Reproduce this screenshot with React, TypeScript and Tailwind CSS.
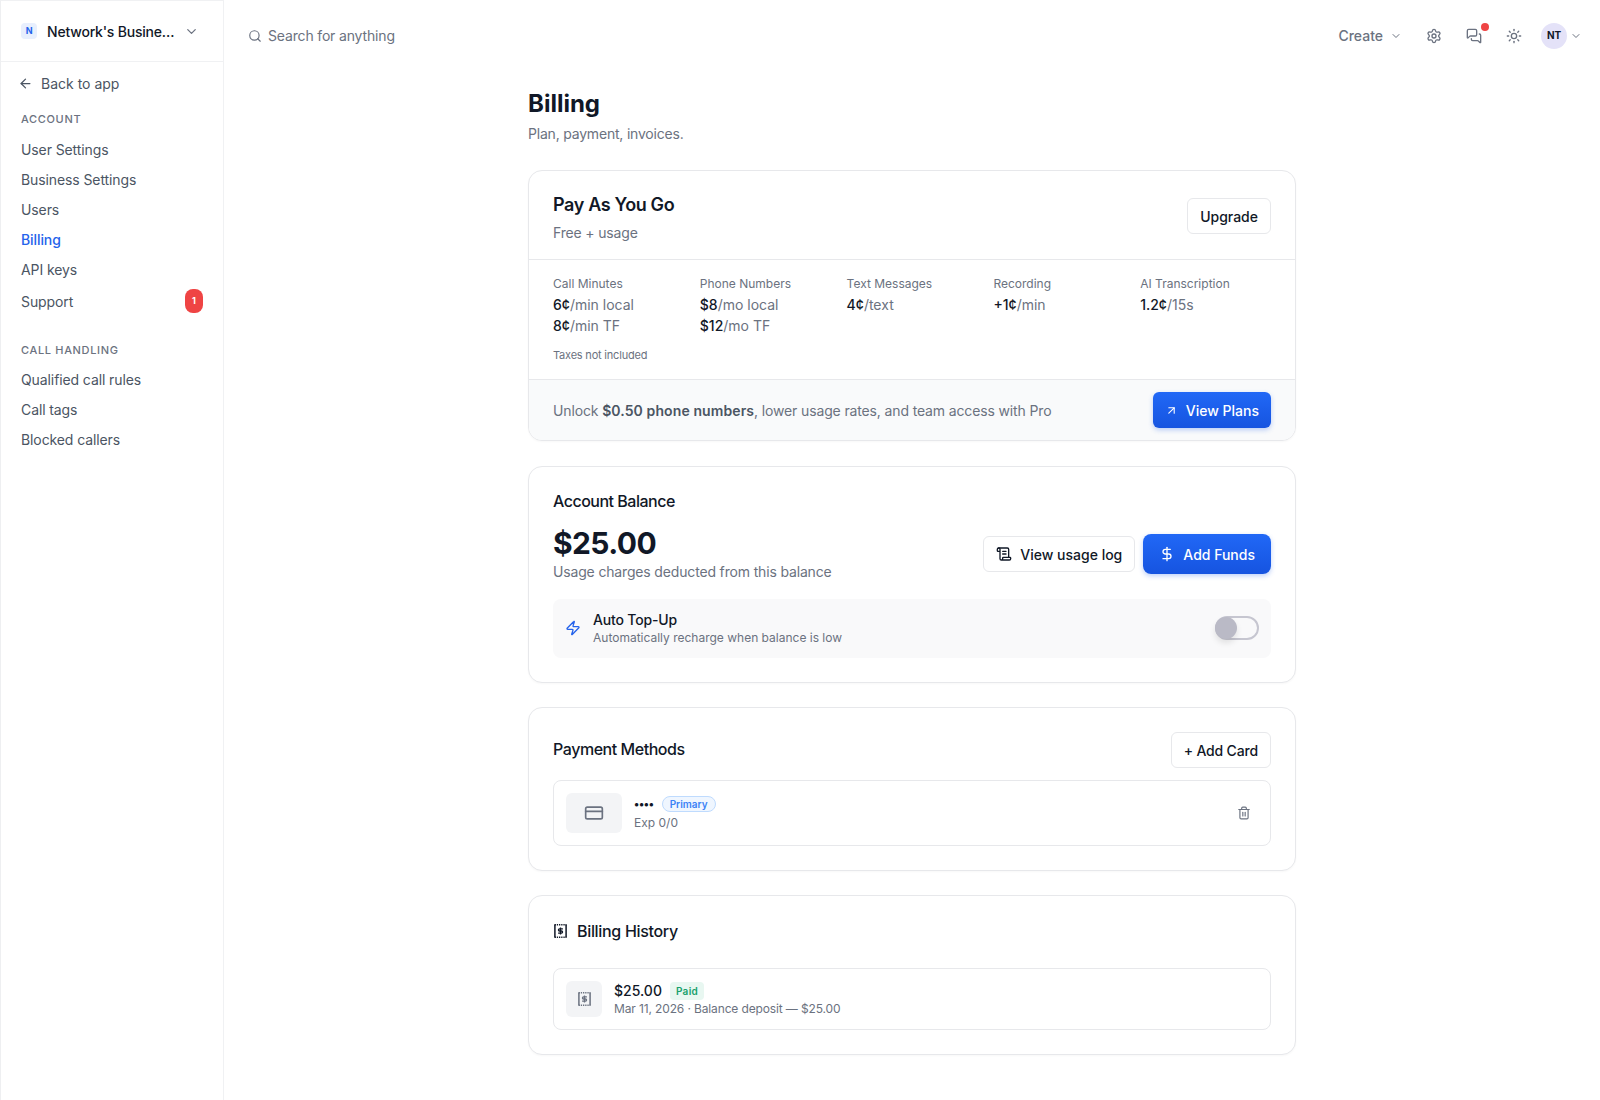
import { ArrowLeft, ArrowUpRight, ChevronDown, CreditCard, DollarSign, MessagesSquare, ScrollText, Search, Settings, Sun, Trash2, Zap } from "lucide-react"

const accountLinks = ["User Settings", "Business Settings", "Users", "Billing", "API keys"]
const callLinks = ["Qualified call rules", "Call tags", "Blocked callers"]

const rates = [
    { label: "Call Minutes", lines: [["6¢", "/min local"], ["8¢", "/min TF"]] },
    { label: "Phone Numbers", lines: [["$8", "/mo local"], ["$12", "/mo TF"]] },
    { label: "Text Messages", lines: [["4¢", "/text"]] },
    { label: "Recording", lines: [["+1¢", "/min"]] },
    { label: "AI Transcription", lines: [["1.2¢", "/15s"]] },
]

function BillIcon({ className }: { className?: string }) {
    return (
        <svg viewBox="0 0 13 14" fill="none" stroke="currentColor" className={className}>
            <path d="M0.9 0.6V13.4M12.1 0.6V13.4" strokeWidth="1.5" />
            <path d="M0.6 0.8H12.4M0.6 13.2H12.4" strokeWidth="1.5" strokeDasharray="1.3 0.9" />
            <path d="M8.9 4.9H5.5a1 1 0 0 0 0 2.1h2a1 1 0 0 1 0 2.1H4.1M6.5 3.4v7.2" strokeWidth="1.3" />
        </svg>
    )
}

function Sidebar() {
    return (
        <aside className="flex h-[1100px] w-[224px] shrink-0 flex-col border-x border-t border-[#f0f1f3] border-l-[#eeeff1]">
            <div className="flex h-[61px] items-center justify-between border-b border-[#f0f1f3] pl-[20px] pr-[24px]">
                <div className="flex items-center gap-[10px]">
                    <div className="flex h-[16px] w-[16px] items-center justify-center rounded-[4px] bg-[#e8effd] text-[9px] font-bold text-[#2563eb]">N</div>
                    <span className="text-[14px] font-medium tracking-[-0.2px] text-[#111827]">Network's Busine…</span>
                </div>
                <ChevronDown className="h-[15px] w-[15px] text-[#6b7280]" />
            </div>
            <div className="flex h-[42px] items-center gap-[8px] pl-[17px] text-[14px] tracking-normal text-[#4b5563]">
                <ArrowLeft className="h-[15px] w-[15px]" />
                <span>Back to app</span>
            </div>
            <nav className="flex flex-col px-[20px] pt-[6px] text-[14px] tracking-[-0.1px] text-[#4b5563]">
                <div className="mb-[6px] flex h-[18px] items-center text-[11px] font-medium tracking-[0.06em] text-[#6b7280]">ACCOUNT</div>
                {accountLinks.map((item) => (
                    <div key={item} className={`flex h-[30px] items-center ${item === "Billing" ? "font-medium text-[#2563eb]" : ""}`}>
                        {item}
                    </div>
                ))}
                <div className="flex h-[34px] items-center justify-between">
                    <span>Support</span>
                    <span className="flex h-[24px] w-[18px] items-center justify-center rounded-[8px] bg-[#ef4444] text-[9px] font-bold text-white">1</span>
                </div>
                <div className="mb-[5px] mt-[23px] flex h-[18px] items-center text-[11px] font-medium tracking-[0.06em] text-[#6b7280]">CALL HANDLING</div>
                {callLinks.map((item) => (
                    <div key={item} className="flex h-[30px] items-center">{item}</div>
                ))}
            </nav>
        </aside>
    )
}

function TopBar() {
    return (
        <header className="flex h-[71px] items-center justify-between pl-[24px] pr-[18px]">
            <div className="flex items-center gap-[6px] text-[14px] text-[#6b7280]">
                <Search className="h-[14px] w-[14px]" />
                <span>Search for anything</span>
            </div>
            <div className="flex items-center text-[#6b7280]">
                <span className="text-[14px] font-medium tracking-normal">Create</span>
                <ChevronDown className="ml-[7px] h-[12px] w-[12px]" />
                <Settings className="ml-[24px] h-[16px] w-[16px]" />
                <div className="relative ml-[24px]">
                    <MessagesSquare className="h-[16px] w-[16px]" />
                    <span className="absolute -right-[7px] -top-[5px] h-[8px] w-[8px] rounded-full bg-[#ef4444]" />
                </div>
                <Sun className="ml-[24px] h-[16px] w-[16px]" />
                <div className="ml-[19px] flex h-[26px] w-[26px] items-center justify-center rounded-full bg-[#e4e2f8] text-[10px] font-bold text-[#111827]">NT</div>
                <ChevronDown className="ml-[3px] h-[12px] w-[12px]" />
            </div>
        </header>
    )
}

function PlanCard() {
    return (
        <section className="overflow-hidden rounded-[14px] border border-[#e7e8eb] bg-white shadow-[0_1px_2px_rgba(0,0,0,0.03)]">
            <div className="flex h-[89px] items-center justify-between border-b border-[#e7e8eb] px-[24px] pt-[2px]">
                <div className="mt-[2px]">
                    <h2 className="text-[18px] font-semibold leading-[28px] tracking-[-0.36px] text-[#111827]">Pay As You Go</h2>
                    <p className="mt-[4px] text-[14px] leading-[20px] text-[#6b7280]">Free + usage</p>
                </div>
                <button className="h-[36px] rounded-[6px] border border-[#e7e8eb] px-[12px] text-[14px] font-medium tracking-normal text-[#111827]">Upgrade</button>
            </div>
            <div className="h-[119px] px-[24px] pt-[16px]">
                <div className="grid grid-cols-5 gap-[16px]">
                    {rates.map((rate) => (
                        <div key={rate.label}>
                            <div className="text-[12px] leading-[16px] tracking-normal text-[#6b7280]">{rate.label}</div>
                            <div className="mt-[4px] flex flex-col gap-[2.5px]">
                                {rate.lines.map(([price, unit]) => (
                                    <div key={unit} className="text-[14px] leading-[18px] tracking-normal text-[#6b7280]">
                                        <span className="font-medium text-[#111827]">{price}</span>
                                        {unit}
                                    </div>
                                ))}
                            </div>
                        </div>
                    ))}
                </div>
                <p className="mt-[12px] text-[11px] leading-[16px] tracking-[-0.2px] text-[#6b7280]">Taxes not included</p>
            </div>
            <div className="flex h-[61px] items-center justify-between border-t border-[#e7e8eb] bg-[#f9fafb] px-[24px]">
                <p className="text-[14px] tracking-[-0.14px] text-[#6b7280]">
                    Unlock <span className="font-semibold tracking-[0.1px] text-[#4b5563]">$0.50 phone numbers</span>, lower usage rates, and team access with Pro
                </p>
                <button className="flex h-[36px] items-center gap-[8px] rounded-[6px] bg-gradient-to-b from-[#2168f6] to-[#1654e0] px-[12px] text-[14px] font-medium tracking-normal text-white shadow-[0_2px_5px_rgba(37,99,235,0.3)]">
                    <ArrowUpRight className="h-[13px] w-[13px]" />
                    View Plans
                </button>
            </div>
        </section>
    )
}

function BalanceCard() {
    return (
        <section className="mt-[1px] h-[217px] rounded-[14px] border border-[#e7e8eb] bg-white px-[24px] pt-[22px] shadow-[0_1px_2px_rgba(0,0,0,0.03)]">
            <h2 className="text-[16px] font-medium leading-[24px] tracking-[-0.5px] text-[#111827]">Account Balance</h2>
            <div className="mt-[13px] flex items-center justify-between">
                <div>
                    <div className="text-[30px] font-bold leading-[34px] tracking-[-0.6px] text-[#111827]">$25.00</div>
                    <p className="mt-[2px] text-[14px] leading-[20px] text-[#6b7280]">Usage charges deducted from this balance</p>
                </div>
                <div className="flex items-center gap-[8px]">
                    <button className="flex h-[36px] items-center gap-[8px] rounded-[6px] border border-[#e7e8eb] px-[12px] text-[14px] font-medium tracking-normal text-[#111827]">
                        <ScrollText className="h-[16px] w-[16px]" />
                        View usage log
                    </button>
                    <button className="flex h-[40px] items-center gap-[8px] rounded-[8px] bg-gradient-to-b from-[#2168f6] to-[#1654e0] px-[16px] text-[14px] font-medium tracking-normal text-white shadow-[0_2px_5px_rgba(37,99,235,0.3)]">
                        <DollarSign className="h-[16px] w-[16px]" />
                        Add Funds
                    </button>
                </div>
            </div>
            <div className="mt-[17px] flex h-[59px] items-center justify-between rounded-[8px] bg-[#f9f9fa] px-[12px]">
                <div className="flex items-center gap-[12px]">
                    <Zap className="mb-[2px] h-[16px] w-[16px] text-[#2563eb]" />
                    <div>
                        <div className="text-[14px] font-medium leading-[18px] text-[#111827]">Auto Top-Up</div>
                        <div className="mt-[1px] text-[12px] leading-[16px] tracking-normal text-[#6b7280]">Automatically recharge when balance is low</div>
                    </div>
                </div>
                <div className="relative mb-[2px] h-[24px] w-[44px] rounded-full border-2 border-[#c6c6d0]">
                    <span className="absolute -left-[2px] -top-[1px] h-[22px] w-[22px] rounded-full bg-[#babac6] shadow-[0_4px_6px_rgba(0,0,0,0.1)]" />
                </div>
            </div>
        </section>
    )
}

function PaymentCard() {
    return (
        <section className="h-[164px] rounded-[14px] border border-[#e7e8eb] bg-white px-[24px] pt-[24px] shadow-[0_1px_2px_rgba(0,0,0,0.03)]">
            <div className="flex h-[36px] items-center justify-between">
                <h2 className="pb-[2px] text-[16px] font-medium tracking-[-0.45px] text-[#111827]">Payment Methods</h2>
                <button className="h-[36px] rounded-[6px] border border-[#e7e8eb] px-[12px] text-[14px] font-medium text-[#111827]">+ Add Card</button>
            </div>
            <div className="mt-[12px] flex h-[66px] items-center justify-between rounded-[8px] border border-[#e7e8eb] pl-[12px] pr-[19px]">
                <div className="flex items-center gap-[12px]">
                    <div className="flex h-[40px] w-[56px] items-center justify-center rounded-[6px] bg-[#f3f4f6]">
                        <CreditCard className="h-[20px] w-[20px] text-[#6b7280]" />
                    </div>
                    <div>
                        <div className="flex items-center gap-[8px]">
                            <span className="text-[11px] font-bold leading-[18px] tracking-[-0.3px] text-[#111827]">••••</span>
                            <span className="rounded-full border border-[#bfdbfe] bg-[#eff6ff] px-[7px] text-[10px] font-semibold leading-[14px] tracking-normal text-[#3b82f6]">Primary</span>
                        </div>
                        <div className="mt-[1px] text-[12px] leading-[18px] tracking-normal text-[#6b7280]">Exp 0/0</div>
                    </div>
                </div>
                <Trash2 className="h-[14px] w-[14px] text-[#6b7280]" />
            </div>
        </section>
    )
}

function HistoryCard() {
    return (
        <section className="h-[160px] rounded-[14px] border border-[#e7e8eb] bg-white px-[24px] pt-[23px] shadow-[0_1px_2px_rgba(0,0,0,0.03)]">
            <div className="flex h-[24px] items-center gap-[10px]">
                <BillIcon className="ml-[1px] h-[14px] w-[13px] text-[#111827]" />
                <h2 className="text-[16px] font-medium tracking-[-0.32px] text-[#111827]">Billing History</h2>
            </div>
            <div className="mt-[25px] flex h-[62px] items-center gap-[12px] rounded-[8px] border border-[#e7e8eb] px-[12px]">
                <div className="flex h-[36px] w-[36px] items-center justify-center rounded-[6px] bg-[#f3f4f6]">
                    <BillIcon className="h-[14px] w-[13px] text-[#6b7280]" />
                </div>
                <div>
                    <div className="flex items-center gap-[8px]">
                        <span className="text-[14px] font-medium leading-[18px] tracking-normal text-[#111827]">$25.00</span>
                        <span className="rounded-[4px] bg-[#e8f7f1] px-[6px] text-[10px] font-semibold leading-[18px] tracking-[0.3px] text-[#16a06c]">Paid</span>
                    </div>
                    <div className="mt-[1px] text-[12px] leading-[16px] tracking-[-0.13px] text-[#6b7280]">Mar 11, 2026 · Balance deposit — $25.00</div>
                </div>
            </div>
        </section>
    )
}

export default function App() {
    return (
        <div className="flex min-h-[1100px] bg-white font-['Inter',sans-serif] tracking-[-0.16px]">
            <Sidebar />
            <div className="min-w-0 flex-1">
                <TopBar />
                <main className="mx-auto w-[768px] pt-[17px]">
                    <h1 className="text-[24px] font-bold leading-[32px] tracking-normal text-[#111827]">Billing</h1>
                    <p className="mt-[4px] text-[14px] leading-[20px] tracking-[-0.2px] text-[#6b7280]">Plan, payment, invoices.</p>
                    <div className="mt-[26px] flex flex-col gap-[24px]">
                        <PlanCard />
                        <BalanceCard />
                        <PaymentCard />
                        <HistoryCard />
                    </div>
                </main>
            </div>
        </div>
    )
}
